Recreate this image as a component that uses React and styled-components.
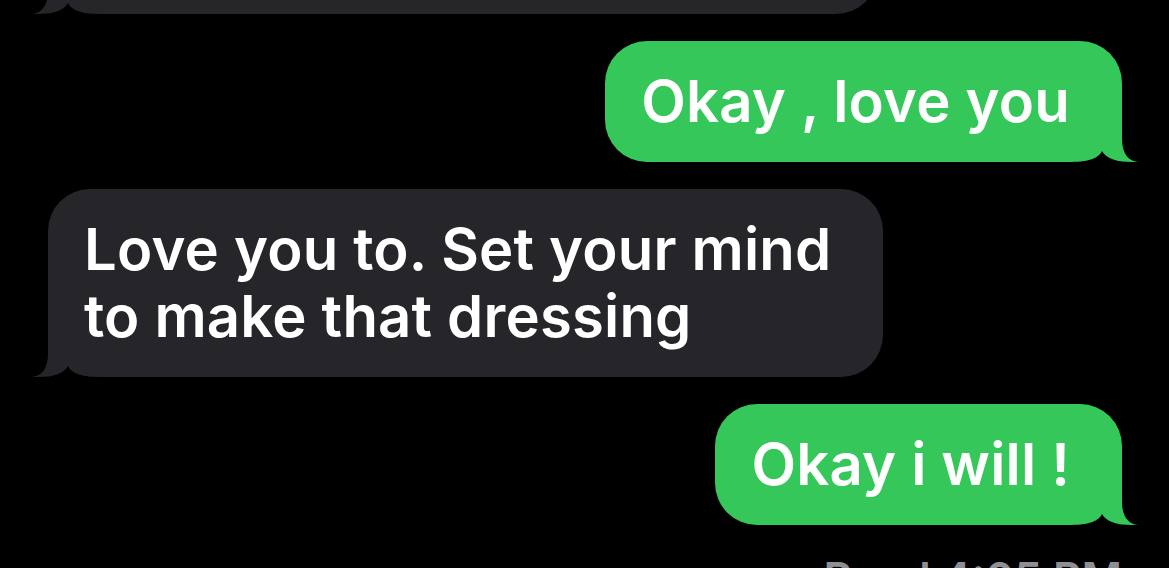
import React from "react";
import styled, { createGlobalStyle } from "styled-components";

const GlobalStyle = createGlobalStyle`
  html, body {
    margin: 0;
    padding: 0;
    background: #000;
    overflow: hidden;
  }
  #root {
    height: 568px;
  }
`;

const GREEN = "#35c759";
const GRAY = "#262529";

const Thread = styled.div`
  display: flex;
  flex-direction: column;
  gap: 27px;
  padding: 0 47px 0 48px;
  font-family: Inter, "Noto Sans", sans-serif;
`;

const Row = styled.div`
  display: flex;
  justify-content: ${(p) => (p.$sent ? "flex-end" : "flex-start")};
`;

const Bubble = styled.div`
  position: relative;
  background: ${(p) => (p.$sent ? GREEN : GRAY)};
  color: #fff;
  font-size: 58px;
  font-weight: 600;
  line-height: 67px;
  letter-spacing: 0.2px;
  padding: 27px 52px 27px 36px;
  border-radius: ${(p) => (p.$sent ? "42px 42px 0 42px" : "42px 42px 42px 0")};
  white-space: nowrap;
`;

const CutBubble = styled(Bubble)`
  width: 830px;
  box-sizing: border-box;
  margin-top: -107px;
`;

const TailSvg = styled.svg`
  position: absolute;
  bottom: 0;
  width: 70px;
  height: 45px;
  ${(p) =>
    p.$sent
      ? "right: -16px;"
      : "left: -16px; transform: scaleX(-1);"}
`;

const Tail = ({ sent }) => (
  <TailSvg $sent={sent} viewBox="0 0 70 45">
    <path
      d="M54 0 L54 22 C54 36 60 44 70 45 L34 45 L34 0 Z"
      fill={sent ? GREEN : GRAY}
    />
    <path
      d="M0 45 C20 45 30 42 34 34 C38 42 50 45 64 45 Z"
      fill="#000"
    />
  </TailSvg>
);

const Status = styled.div`
  margin-top: 2px;
  text-align: right;
  color: #8e8e93;
  font-size: 44px;
  font-weight: 600;
  line-height: 48px;
`;

export default function App() {
  return (
    <>
      <GlobalStyle />
      <Thread>
        <Row>
          <CutBubble>
            &nbsp;
            <Tail />
          </CutBubble>
        </Row>
        <Row $sent>
          <Bubble $sent>
            Okay , love you
            <Tail sent />
          </Bubble>
        </Row>
        <Row>
          <Bubble>
            Love you to. Set your mind
            <br />
            to make that dressing
            <Tail />
          </Bubble>
        </Row>
        <Row $sent>
          <Bubble $sent>
            Okay i will !
            <Tail sent />
          </Bubble>
        </Row>
        <Status>Read 4:05 PM</Status>
      </Thread>
    </>
  );
}
